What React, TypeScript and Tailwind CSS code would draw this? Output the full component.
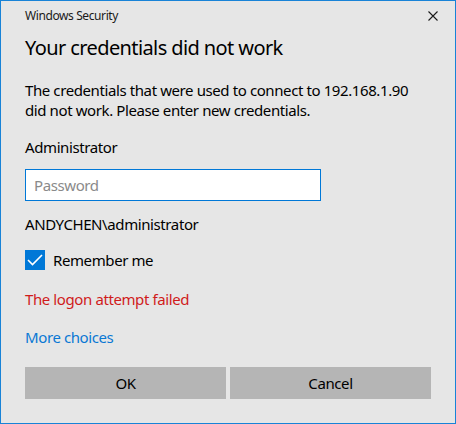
import React from 'react';

const font = { fontFamily: '"Segoe UI", "Noto Sans", sans-serif' };

export default function App() {
  return (
    <div
      className="flex h-[424px] w-[456px] flex-col border border-[#1883d7] bg-[#e6e6e6] text-black"
      style={font}
    >
      {/* Title bar */}
      <div className="flex h-[30px] items-center justify-between pl-6 pr-[17px]">
        <span className="text-[12px] leading-none tracking-[-0.4px] text-[#1a1a1a]">Windows Security</span>
        <svg width="10" height="10" viewBox="0 0 10 10" className="shrink-0">
          <path d="M0.5 0.5 L9.5 9.5 M9.5 0.5 L0.5 9.5" stroke="#1a1a1a" strokeWidth="1.1" fill="none" />
        </svg>
      </div>

      <div className="flex flex-col px-6 text-[15px] leading-[20px] tracking-[-0.4px]">
        <h1 className="mt-[3px] text-[20px] font-normal leading-[28px] tracking-[-0.6px]">Your credentials did not work</h1>

        <p className="mt-[18px]">
          The credentials that were used to connect to 192.168.1.90
          <br />
          did not work. Please enter new credentials.
        </p>

        <div className="mt-[17px]">Administrator</div>

        <input
          type="password"
          placeholder="Password"
          className="mt-[12px] h-[32px] w-[296px] border border-[#0078d7] bg-white px-2 text-[15px] tracking-[-0.4px] outline-none placeholder:text-[#8a8a8a]"
          style={font}
        />

        <div className="mt-[13px]">ANDYCHEN\administrator</div>

        <label className="mt-[16px] flex h-[20px] items-center gap-2">
          <span className="flex h-[20px] w-[20px] items-center justify-center bg-[#0078d7]">
            <svg width="20" height="20" viewBox="0 0 20 20">
              <path d="M3 10 L7.5 14.5 L17 5" stroke="white" strokeWidth="1.6" fill="none" />
            </svg>
          </span>
          <span>Remember me</span>
        </label>

        <div className="mt-[19px] text-[#d01b1b]">The logon attempt failed</div>

        <div className="mt-[18px] text-[#0a78d4]">More choices</div>

        <div className="mt-[20px] grid grid-cols-2 gap-1">
          <button className="h-[32px] bg-[#b5b5b5] tracking-[-0.4px]">OK</button>
          <button className="h-[32px] bg-[#b5b5b5] tracking-[-0.4px]">Cancel</button>
        </div>
      </div>
    </div>
  );
}
